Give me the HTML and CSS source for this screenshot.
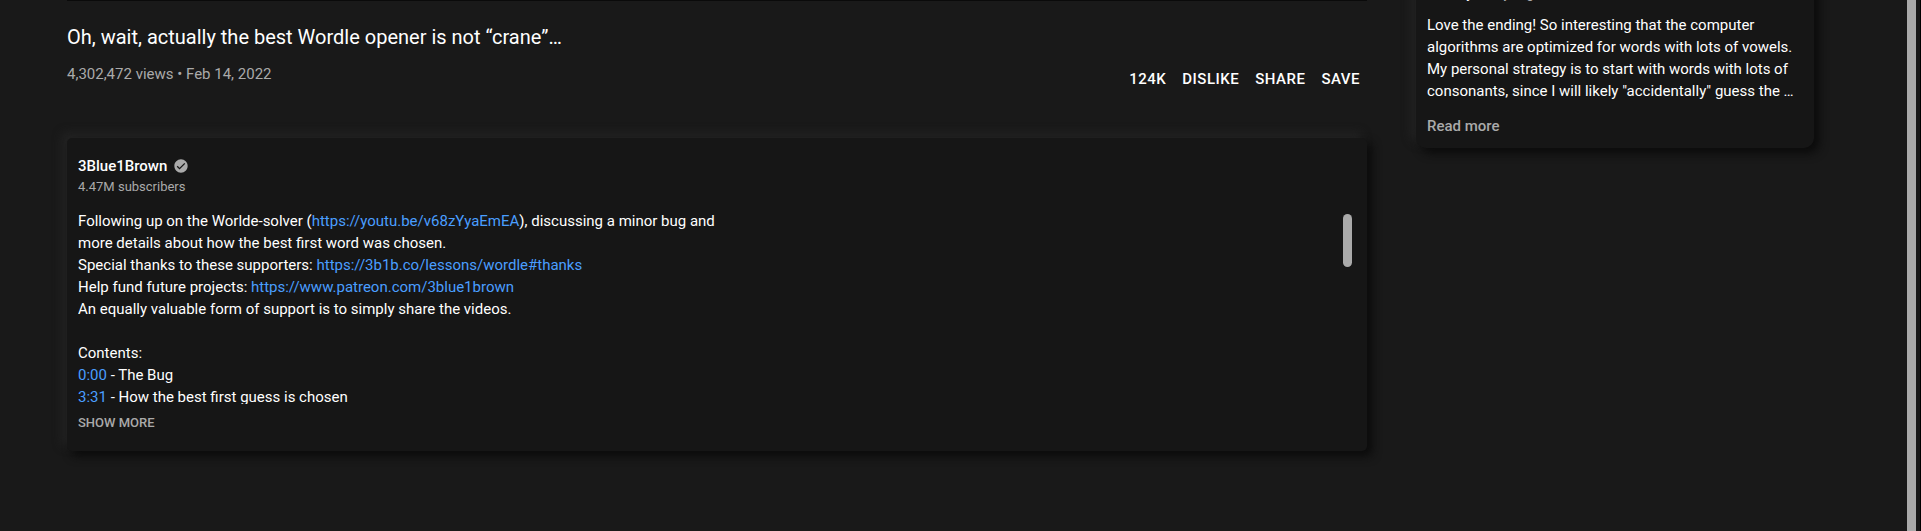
FILE: index.html
```html
<!DOCTYPE html>
<html lang="en">
<head>
<meta charset="utf-8">
<title>Oh, wait, actually the best Wordle opener is not “crane”…</title>
<link rel="stylesheet" href="styles.css">
</head>
<body>
<div class="page">
  <main class="primary">
    <div class="player-edge"></div>
    <h1 class="title">Oh, wait, actually the best Wordle opener is not “crane”…</h1>
    <div class="info">
      <p class="stats">4,302,472 views • Feb 14, 2022</p>
      <div class="actions">
        <button type="button">124K</button>
        <button type="button">DISLIKE</button>
        <button type="button">SHARE</button>
        <button type="button">SAVE</button>
      </div>
    </div>
    <section class="card">
      <div class="channel">
        <a class="channel-name" href="#">3Blue1Brown</a>
        <svg class="badge" viewBox="0 0 24 24" aria-label="Verified"><path d="M12 2C6.500 2 2 6.500 2 12s4.500 10 10 10 10-4.500 10-10S17.500 2 12 2zM9.800 17.300l-4.200-4.100L7 11.800l2.800 2.700L17 7.400l1.400 1.400-8.600 8.500z"/></svg>
      </div>
      <p class="subs">4.47M subscribers</p>
      <div class="description">
        <div class="text">Following up on the Worlde-solver (<a href="#">https://youtu.be/v68zYyaEmEA</a>), discussing a minor bug and<br>
        more details about how the best first word was chosen.<br>
        Special thanks to these supporters: <a href="#">https://3b1b.co/lessons/wordle#thanks</a><br>
        Help fund future projects: <a href="#">https://www.patreon.com/3blue1brown</a><br>
        An equally valuable form of support is to simply share the videos.<br>
        <br>
        Contents:<br>
        <a href="#">0:00</a> - The Bug<br>
        <a href="#">3:31</a> - How the best first guess is chosen</div>
        <div class="thumb"></div>
      </div>
      <button type="button" class="show-more">SHOW MORE</button>
    </section>
  </main>
  <aside class="comment">
    <div class="byline"><span class="author">Dorothy</span><span class="time">3 days ago</span></div>
    <p class="comment-text">Love the ending! So interesting that the computer algorithms are optimized for words with lots of vowels. My personal strategy is to start with words with lots of consonants, since I will likely "accidentally" guess the …</p>
    <button type="button" class="read-more">Read more</button>
  </aside>
  <div class="scrollbar"><div class="scroll-thumb"></div></div>
</div>
</body>
</html>
```
FILE: styles.css
```css
* { box-sizing: border-box; }
body {
  margin: 0;
  background: #191919;
  color: #fff;
  font: 400 15px/22px Roboto, sans-serif;
  overflow: hidden;
}
h1, p { margin: 0; }
a { color: #4a9eff; text-decoration: none; }
button {
  padding: 0;
  border: 0;
  background: none;
  color: inherit;
  font: inherit;
  cursor: pointer;
}
.page {
  display: flex;
  align-items: flex-start;
  min-height: 100vh;
  padding-left: 67px;
}
.primary { flex: 1; min-width: 0; }
.player-edge { height: 1px; background: #0a0a0a; }
.title {
  margin-top: 22px;
  font-size: 20px;
  line-height: 28px;
  font-weight: 400;
}
.info {
  display: flex;
  justify-content: space-between;
  padding: 12px 7px 0 0;
}
.stats { color: #aaa; }
.actions {
  display: flex;
  gap: 16px;
  padding-top: 5px;
}
.actions button { font-weight: 500; letter-spacing: 0.5px; }
.card {
  margin-top: 48px;
  padding: 17px 11px 16px;
  border-radius: 5px;
  background: #161616;
  box-shadow: 5px 5px 10px #0b0b0b, -5px -5px 10px #242424;
}
.channel { display: flex; align-items: center; gap: 6px; }
.channel-name { color: #fff; font-weight: 500; }
.badge { width: 16px; height: 16px; fill: #aaa; }
.subs { font-size: 13px; line-height: 20px; color: #aaa; }
.description {
  display: flex;
  justify-content: space-between;
  height: 194px;
  margin-top: 13px;
  padding-right: 4px;
  overflow: hidden;
}
.thumb {
  width: 9px;
  height: 53px;
  margin-top: 4px;
  border-radius: 5px;
  background: #aaa;
}
.show-more {
  display: block;
  margin-top: 7px;
  color: #aaa;
  font-size: 13px;
  line-height: 24px;
  font-weight: 500;
}
.comment {
  width: 398px;
  margin: -25px 93px 0 49px;
  padding: 10px;
  padding-left: 11px;
  border-radius: 0 0 10px 10px;
  background: #161616;
  box-shadow: 5px 5px 10px #0b0b0b, -5px -5px 10px #242424;
}
.byline { display: flex; gap: 6px; font-size: 13px; line-height: 18px; height: 29px; }
.author { font-weight: 500; }
.time { color: #aaa; }
.read-more {
  display: block;
  margin-top: 13px;
  margin-bottom: 1px;
  color: #aaa;
  font-weight: 500;
}
.scrollbar {
  align-self: stretch;
  width: 14px;
  padding-right: 4px;
  border-right: 1px solid #000;
}
.scroll-thumb { height: 100%; background: #aaa; }
```
